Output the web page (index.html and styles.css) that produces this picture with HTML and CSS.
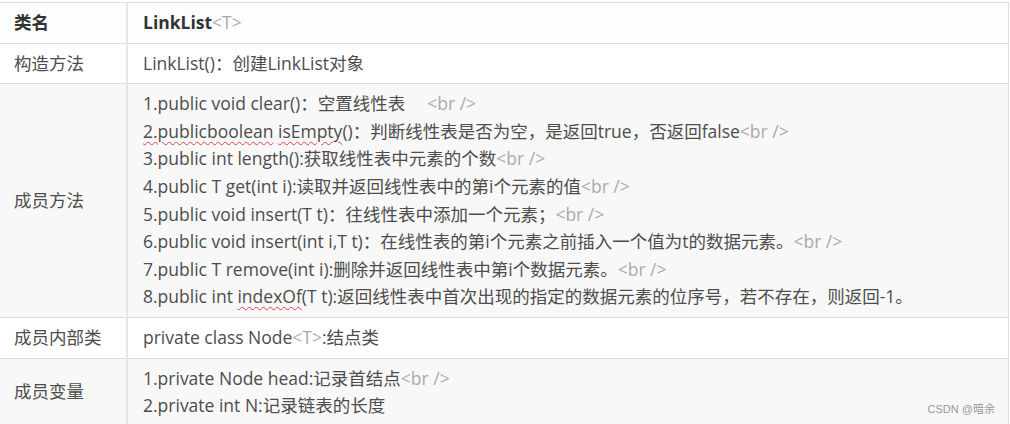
FILE: index.html
```html
<!DOCTYPE html>
<html lang="zh-CN">
<head>
  <meta charset="UTF-8" />
  <title>LinkList</title>
  <link rel="stylesheet" href="styles.css">
</head>
<body>
  <table class="api">
    <tr class="head">
      <td class="name">类名</td>
      <td>LinkList<span class="tag">&lt;T&gt;</span></td>
    </tr>
    <tr class="row-w">
      <td class="name">构造方法</td>
      <td>LinkList()：创建LinkList对象</td>
    </tr>
    <tr class="row-g">
      <td class="name">成员方法</td>
      <td>
        <div>1.public void clear()：空置线性表<span class="tag gap">&lt;br /&gt;</span></div>
        <div><span class="typo">2.publicboolean</span> <span class="typo">isEmpty</span>()：判断线性表是否为空，是返回true，否返回false<span class="tag">&lt;br /&gt;</span></div>
        <div>3.public int length():获取线性表中元素的个数<span class="tag">&lt;br /&gt;</span></div>
        <div>4.public T get(int i):读取并返回线性表中的第i个元素的值<span class="tag">&lt;br /&gt;</span></div>
        <div>5.public void insert(T t)：往线性表中添加一个元素；<span class="tag">&lt;br /&gt;</span></div>
        <div>6.public void insert(int i,T t)：在线性表的第i个元素之前插入一个值为t的数据元素。<span class="tag">&lt;br /&gt;</span></div>
        <div>7.public T remove(int i):删除并返回线性表中第i个数据元素。<span class="tag">&lt;br /&gt;</span></div>
        <div>8.public int <span class="typo">indexOf</span>(T t):返回线性表中首次出现的指定的数据元素的位序号，若不存在，则返回-1。</div>
      </td>
    </tr>
    <tr class="row-w">
      <td class="name">成员内部类</td>
      <td>private class Node<span class="tag">&lt;T&gt;</span>:结点类</td>
    </tr>
    <tr class="row-g">
      <td class="name">成员变量</td>
      <td>
        <div>1.private Node head:记录首结点<span class="tag">&lt;br /&gt;</span></div>
        <div>2.private int N:记录链表的长度</div>
      </td>
    </tr>
  </table>
  <div class="mark">CSDN @暗余</div>
</body>
</html>
```

FILE: styles.css
```css
body {
  margin: 0;
  background: #fff;
  font-family: "Open Sans", "Noto Sans CJK SC", sans-serif;
  color: #4d4d4d;
  overflow: hidden;
}

.api {
  border-collapse: collapse;
  width: 1010px;
  margin: 2px 0 0 -1px;
  font-size: 17.5px;
  line-height: 27.6px;
}

.api td {
  border: 1px solid #dcdcdc;
  padding: 6px 15px;
  vertical-align: middle;
  white-space: nowrap;
}

.api td.name {
  width: 97px;
  padding-left: 14px;
  border-right: 2px solid #e6e6e6;
}

.head td {
  background: #fdfdfd;
  font-weight: bold;
  color: #333;
}

.row-w td {
  background: #fff;
}

.row-g td {
  background: #f8f8f8;
}

.tag {
  color: #aaa;
  font-weight: normal;
}

.gap {
  margin-left: 22px;
}

.typo {
  text-decoration: underline wavy #e04040;
  text-decoration-thickness: 1px;
  text-underline-offset: 3px;
}

.mark {
  position: absolute;
  right: 15px;
  bottom: 8px;
  font-family: "Liberation Sans", "Noto Sans CJK SC", sans-serif;
  font-size: 11px;
  color: #999;
}
```
